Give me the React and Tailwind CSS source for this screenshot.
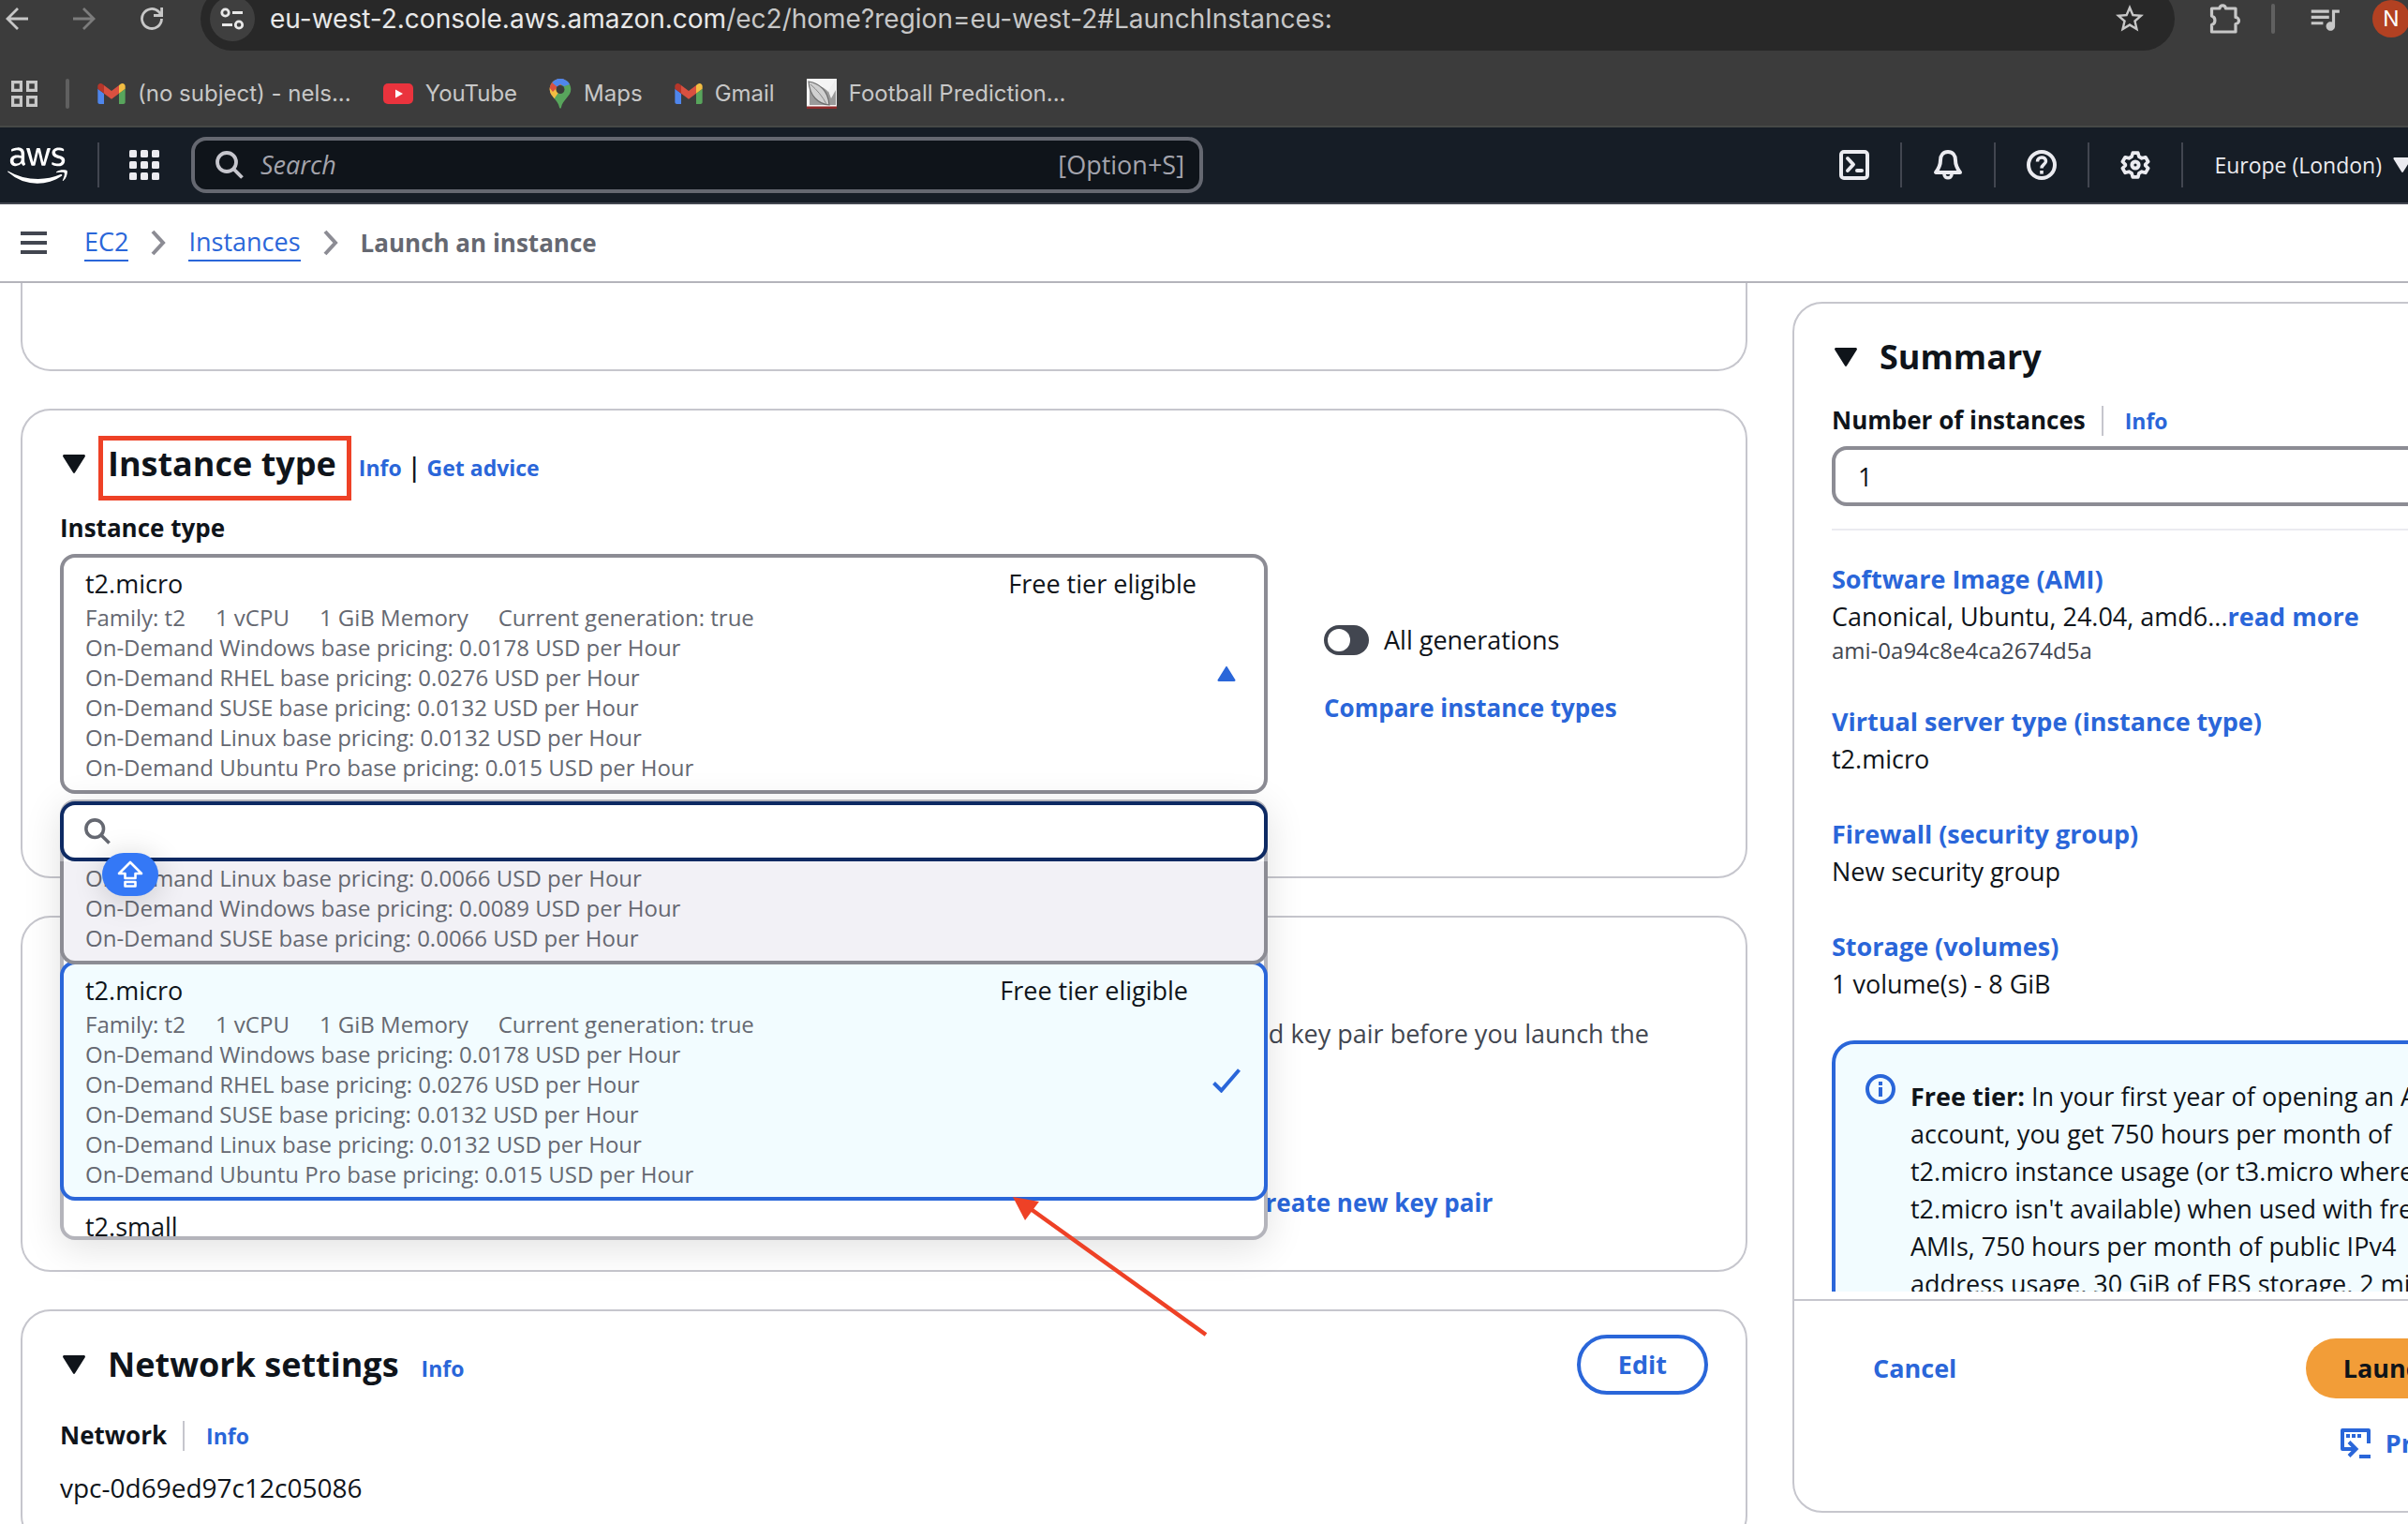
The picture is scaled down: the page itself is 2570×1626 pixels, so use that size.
import React from "react";
import { FaAws } from "react-icons/fa";
import { MdStarBorder, MdQueueMusic } from "react-icons/md";

/* ---------- icons ---------- */

const GmailIcon = () => (
  <svg viewBox="52 42 88 66" className="h-[22px] w-[30px] shrink-0" aria-hidden="true">
    <path fill="#4f86ec" d="M58 108h14V74L52 59v43c0 3.32 2.69 6 6 6" />
    <path fill="#58a55c" d="M120 108h14c3.32 0 6-2.69 6-6V59l-20 15" />
    <path fill="#f2bd42" d="M120 48v26l20-15v-8c0-7.42-8.47-11.65-14.4-7.2" />
    <path fill="#d95040" d="M72 74V48l24 18 24-18v26L96 92" />
    <path fill="#b5362a" d="M52 51v8l20 15V48l-5.6-4.2c-5.94-4.45-14.4-.22-14.4 7.2" />
  </svg>
);

const YouTubeIcon = () => (
  <svg viewBox="0 0 32 22" className="h-[22px] w-8 shrink-0" aria-hidden="true">
    <rect width="32" height="22" rx="5" fill="#ea333d" />
    <path d="M13 6.500v9l8-4.500z" fill="#fff" />
  </svg>
);

const MapsIcon = () => (
  <svg viewBox="0 0 24 32" className="h-8 w-6 shrink-0" aria-hidden="true">
    <defs>
      <clipPath id="pin">
        <path d="M12 0C5.400 0 .7 5.100.7 11.300c0 7.700 9 11.200 10.300 19.300.2 1.600 1.800 1.600 2 0 1.300-8.100 10.300-11.600 10.300-19.300C23.300 5.100 18.600 0 12 0z" />
      </clipPath>
    </defs>
    <g clipPath="url(#pin)">
      <rect width="24" height="32" fill="#58a55c" />
      <path d="M0 22 18 0h-18z" fill="#d95040" />
      <path d="M5 24 0 18V10l4-5 8 7-7 10z" fill="#f2bd42" />
      <path d="M3 4.500 8.500 9 18 0H6z" fill="#4f86ec" />
      <path d="M24 0H8l-1 3 9 5 6-2z" fill="#4f86ec" />
      <path d="M0 9 3 4l6 5-5 5z" fill="#d95040" />
    </g>
    <circle cx="12" cy="11.500" r="4.500" fill="#3c3c3c" />
  </svg>
);

const FootballIcon = () => (
  <svg viewBox="0 0 32 32" className="size-8 shrink-0" aria-hidden="true">
    <rect width="32" height="32" fill="#f5f5f5" />
    <path d="M0 29.500h32V32H0z" fill="#8f2b2b" />
    <path d="M31 2v26H3V4c8 2 17 6 20 10z" fill="#9a9a9a" />
    <path d="M2 3c12 2 21 10 22 25C12 27 3 18 2 3z" fill="#d0d0d0" stroke="#6e6e6e" strokeWidth="1.200" />
    <path d="M4 6c7 6 13 13 17 21" stroke="#8a8a8a" fill="none" />
    <path d="M31 1 23 13l3 8 5-9z" fill="#efefef" />
  </svg>
);

const SearchIcon = ({ className }) => (
  <svg viewBox="0 0 30 30" className={className} fill="none" stroke="currentColor" strokeWidth="3.800" aria-hidden="true">
    <circle cx="12" cy="12" r="10" />
    <path d="m19 19 9.500 9.500" />
  </svg>
);

const CaretDown = ({ className }) => (
  <svg viewBox="0 0 24 20" className={className} aria-hidden="true">
    <path d="M1.500 0h21c1.200 0 1.800 1.300 1.200 2.200L13 19.300c-.5.800-1.500.8-2 0L.3 2.200C-.3 1.300.3 0 1.500 0z" fill="currentColor" />
  </svg>
);

const Chevron = () => (
  <svg viewBox="0 0 16 28" className="h-7 w-4 shrink-0 text-[#8c8c94]" fill="none" stroke="currentColor" strokeWidth="4" aria-hidden="true">
    <path d="m2 2 11 12L2 26" />
  </svg>
);

const svg32 = {
  viewBox: "0 0 32 32",
  className: "size-8",
  fill: "none",
  stroke: "currentColor",
  strokeWidth: 4,
  strokeLinejoin: "round",
  "aria-hidden": true,
};

const CloudShellIcon = () => (
  <svg {...svg32}>
    <rect x="2" y="2" width="28" height="28" rx="3" />
    <path d="m9 9 6 6.500L9 22" strokeLinecap="round" />
    <path d="M19 22h5" strokeLinecap="round" />
  </svg>
);

const BellIcon = () => (
  <svg {...svg32}>
    <path d="M16 2c-5 0-8 4-8 9 0 6-2 9-5 13h26c-3-4-5-7-5-13 0-5-3-9-8-9z" />
    <path d="M12 26c0 5 8 5 8 0" strokeWidth="3.500" />
  </svg>
);

const HelpIcon = () => (
  <svg {...svg32}>
    <circle cx="16" cy="16" r="14" />
    <path d="M11.500 12.500c0-6 9-6 9-.5 0 3.500-4.500 3.500-4.500 7.500" strokeWidth="3.500" />
    <path d="M14.200 22h3.600v3.600h-3.600z" fill="currentColor" stroke="none" />
  </svg>
);

const GearIcon = () => (
  <svg {...svg32}>
    <path d="M13 2h6l1.200 4.300 3.300 1.900 4.300-1.200 3 5.200L27.600 15.400v1.200l3.200 3.200-3 5.200-4.300-1.200-3.300 1.900L19 30h-6l-1.200-4.300-3.300-1.900L4.200 25l-3-5.200 3.200-3.200v-1.200L1.200 12.200l3-5.200 4.300 1.200 3.300-1.900z" transform="translate(1.300 1.300) scale(.92)" />
    <circle cx="16" cy="16" r="3.600" />
  </svg>
);

const AppsGrid = () => (
  <svg viewBox="0 0 32 32" className="size-8" fill="currentColor" aria-hidden="true">
    {[0, 12, 24].flatMap((y) => [0, 12, 24].map((x) => <rect key={`${x}-${y}`} x={x} y={y} width="8" height="8" rx="1.500" />))}
  </svg>
);

/* ---------- small shared pieces ---------- */

const Link = ({ children, className = "" }) => (
  <a href="#" className={`font-bold text-[#2a66d9] ${className}`}>{children}</a>
);
const InfoLink = ({ children = "Info" }) => <Link className="text-[23px]">{children}</Link>;

const Rule = () => <span className="mx-[17px] h-8 w-[2px] self-center bg-[#c6c6cd]" />;
const NavRule = () => <span className="h-12 w-[2px] bg-[#424650]" />;

const SectionTitle = ({ title, marked, children, action }) => (
  <div className="flex h-12 items-center">
    <button type="button" aria-label={`Collapse ${title}`} className="ml-[3px] mr-6">
      <CaretDown className="h-5 w-6" />
    </button>
    <div className="flex items-baseline gap-6">
      <h2 className="relative text-[36px] leading-[48px] font-bold whitespace-nowrap">
        {title}
        {marked && <span className="absolute -top-[6px] -right-4 -left-[10px] h-[69px] border-[5px] border-[#ee4126]" />}
      </h2>
      {children}
    </div>
    {action}
  </div>
);

const Card = ({ className = "", children }) => (
  <section className={`shrink-0 rounded-[32px] border-2 border-[#c6c6cd] px-10 pt-[33px] ${className}`}>{children}</section>
);

/* ---------- browser chrome ---------- */

const Bookmark = ({ icon, children }) => (
  <a href="#" className="flex items-center gap-[13px] whitespace-nowrap">
    {icon}
    {children}
  </a>
);

const Browser = () => (
  <div className="shrink-0 overflow-hidden border-b-2 border-[#464846] bg-[#3c3c3c] font-['Inter',sans-serif] text-[#c7c7c7]">
    <div className="flex h-10 items-center pl-[6px]">
      <button type="button" aria-label="Back">
        <svg viewBox="0 0 24 24" className="size-6" fill="none" stroke="currentColor" strokeWidth="2.800"><path d="M13 1 2 12l11 11M2 12h22" /></svg>
      </button>
      <button type="button" aria-label="Forward" className="ml-12 text-[#7c7c7c]">
        <svg viewBox="0 0 24 24" className="size-6" fill="none" stroke="currentColor" strokeWidth="2.800"><path d="m11 1 11 11-11 11M22 12H0" /></svg>
      </button>
      <button type="button" aria-label="Reload" className="ml-12">
        <svg viewBox="0 0 24 24" className="size-6" fill="none" stroke="currentColor" strokeWidth="2.800"><path d="M22.500 12A10.500 10.500 0 1 1 19.500 4.600L22 7.500M22.600 0v8.500H14" /></svg>
      </button>
      <div className="-my-[14px] ml-10 flex h-[68px] min-w-0 flex-1 items-center rounded-full bg-[#282828] pr-[30px] pl-[10px]">
        <button type="button" aria-label="Site information" className="flex size-12 items-center justify-center rounded-full bg-[#3f3f3f] text-[#e8e8e8]">
          <svg viewBox="0 0 26 24" className="h-6 w-[26px]" fill="none" stroke="currentColor" strokeWidth="2.800">
            <circle cx="5.500" cy="5.500" r="3.700" /><path d="M13 5.500h11M2 18.500h11" /><circle cx="20" cy="18.500" r="3.700" />
          </svg>
        </button>
        <p className="ml-4 flex-1 text-[28px] whitespace-nowrap">
          <span className="text-[#e8e8e8]">eu-west-2.console.aws.amazon.com</span>/ec2/home?region=eu-west-2#LaunchInstances:
        </p>
        <button type="button" aria-label="Bookmark this tab"><MdStarBorder className="size-9" /></button>
      </div>
      <button type="button" aria-label="Extensions" className="ml-[37px]">
        <svg viewBox="0 0 34 34" className="size-[34px]" fill="none" stroke="currentColor" strokeWidth="3.200" strokeLinejoin="round">
          <path d="M2.500 6h8.500a3.200 3.200 0 0 1 6.400 0H28v9.500a3.500 3.500 0 0 1 0 7V31H2.500v-7.500a5 5 0 0 0 0-9.500z" />
        </svg>
      </button>
      <span className="ml-8 h-8 w-1 rounded bg-[#606060]" />
      <button type="button" aria-label="Media controls" className="ml-[34px]"><MdQueueMusic className="size-[38px]" /></button>
      <div className="-mr-[2px] ml-8 flex size-10 shrink-0 items-center justify-center rounded-full bg-[#b24122] text-[23px] text-white">N</div>
    </div>
    <div className="mt-[26px] flex h-[68px] items-center pl-3 text-[24px]">
      <button type="button" aria-label="Tab groups">
        <svg viewBox="0 0 28 28" className="size-7" fill="none" stroke="currentColor" strokeWidth="3.200">
          <path d="M1.600 1.600h8.800v8.800H1.600zM17.600 1.600h8.800v8.800h-8.800zM1.600 17.600h8.800v8.800H1.600zM17.600 17.600h8.800v8.800h-8.800z" />
        </svg>
      </button>
      <span className="mx-[30px] h-8 w-1 rounded bg-[#606060]" />
      <nav className="flex items-center gap-[34px]">
        <Bookmark icon={<GmailIcon />}>(no subject) - nels...</Bookmark>
        <Bookmark icon={<YouTubeIcon />}>YouTube</Bookmark>
        <Bookmark icon={<MapsIcon />}>Maps</Bookmark>
        <Bookmark icon={<GmailIcon />}>Gmail</Bookmark>
        <Bookmark icon={<FootballIcon />}>Football Prediction...</Bookmark>
      </nav>
    </div>
  </div>
);

/* ---------- console header ---------- */

const ConsoleHeader = () => (
  <header className="flex h-[82px] shrink-0 items-center overflow-hidden border-b-2 border-[#424650] bg-[#161d26] pl-2 text-[#ebebf0]">
    <a href="#" aria-label="AWS home"><FaAws className="h-[51px] w-16 text-white" /></a>
    <span className="mx-8 h-12 w-[2px] bg-[#424650]" />
    <button type="button" aria-label="Services"><AppsGrid /></button>
    <div className="ml-[34px] flex h-[60px] w-[1080px] items-center gap-[18px] rounded-2xl border-4 border-[#656871] bg-[#0f141a] pr-4 pl-[22px] text-[27px]">
      <SearchIcon className="size-[30px] text-[#c6c6cd]" />
      <input type="text" aria-label="Search" placeholder="Search" className="min-w-0 flex-1 bg-transparent outline-none placeholder:text-[#a4a4ad] placeholder:italic" />
      <span className="text-[#a4a4ad]">[Option+S]</span>
    </div>
    <div className="-mr-1 ml-auto flex shrink-0 items-center gap-[33px]">
      <button type="button" aria-label="CloudShell"><CloudShellIcon /></button>
      <NavRule />
      <button type="button" aria-label="Notifications"><BellIcon /></button>
      <NavRule />
      <button type="button" aria-label="Help"><HelpIcon /></button>
      <NavRule />
      <button type="button" aria-label="Settings"><GearIcon /></button>
      <NavRule />
      <button type="button" className="flex items-center gap-3 text-[23px] font-medium whitespace-nowrap">
        Europe (London)
        <CaretDown className="h-4 w-5" />
      </button>
    </div>
  </header>
);

const Breadcrumbs = () => (
  <nav aria-label="Breadcrumbs" className="flex h-[84px] shrink-0 items-center border-b-2 border-[#b4b4bb] pl-[22px] text-[27px]">
    <button type="button" aria-label="Open navigation" className="mr-[40px]">
      <svg viewBox="0 0 28 24" className="h-6 w-7" fill="#424650"><path d="M0 0h28v4H0zM0 10h28v4H0zM0 20h28v4H0z" /></svg>
    </button>
    <div className="flex items-center gap-6">
      <a href="#" className="border-b-2 border-[#2a66d9] leading-[38px] text-[#2a66d9]">EC2</a>
      <Chevron />
      <a href="#" className="border-b-2 border-[#2a66d9] leading-[38px] text-[#2a66d9]">Instances</a>
      <Chevron />
      <span className="text-[26px] leading-10 font-bold text-[#656871]">Launch an instance</span>
    </div>
  </nav>
);

/* ---------- instance type ---------- */

const micro = [
  "On-Demand Windows base pricing: 0.0178 USD per Hour",
  "On-Demand RHEL base pricing: 0.0276 USD per Hour",
  "On-Demand SUSE base pricing: 0.0132 USD per Hour",
  "On-Demand Linux base pricing: 0.0132 USD per Hour",
  "On-Demand Ubuntu Pro base pricing: 0.015 USD per Hour",
];
const nano = [
  "On-Demand Linux base pricing: 0.0066 USD per Hour",
  "On-Demand Windows base pricing: 0.0089 USD per Hour",
  "On-Demand SUSE base pricing: 0.0066 USD per Hour",
];

const Prices = ({ lines }) => lines.map((l) => <span key={l} className="block">{l}</span>);

const MicroDetails = () => (
  <span className="block flex-1 text-left">
    <span className="flex justify-between text-[27px] leading-10">
      <span>t2.micro</span>
      <span>Free tier eligible</span>
    </span>
    <span className="block text-[24px] leading-8 text-[#656871]">
      <span className="flex gap-8">
        <span>Family: t2</span>
        <span>1 vCPU</span>
        <span>1 GiB Memory</span>
        <span>Current generation: true</span>
      </span>
      <Prices lines={micro} />
    </span>
  </span>
);

const Dropdown = () => (
  <div className="absolute inset-x-0 top-full z-20 mt-[6px] rounded-2xl border-4 border-[#b4b4bb] bg-white shadow-[0_8px_40px_rgba(0,0,0,0.12)]">
    <div className="-mx-1 -mt-[2px] flex h-16 items-center rounded-2xl border-4 border-[#0e2a63] bg-white px-[22px]">
      <SearchIcon className="size-7 text-[#656871]" />
      <input type="text" aria-label="Filter instance types" className="ml-4 min-w-0 flex-1 text-[27px] outline-none" />
    </div>
    <ul role="listbox" aria-label="Instance types" className="-mx-1 h-[400px] overflow-hidden">
      <li role="option" aria-selected="false" className="relative z-10 rounded-b-2xl border-4 border-t-0 border-[#8c8c94] bg-[#f2f1f6] px-[23px] pt-[2px] pb-2 text-[24px] leading-8 text-[#656871]">
        <Prices lines={nano} />
      </li>
      <li role="option" aria-selected="true" className="relative -mt-1 flex items-center gap-[26px] rounded-2xl border-4 border-[#2a66d9] bg-[#f2fcff] py-2 pr-[25px] pl-[23px]">
        <MicroDetails />
        <svg viewBox="0 0 30 26" className="h-[26px] w-[30px]" fill="none" stroke="#2a66d9" strokeWidth="4"><path d="m1.500 15.500 8 8L28.500 1.500" /></svg>
      </li>
      <li role="option" aria-selected="false" className="-mt-1 border-4 border-transparent px-[23px] pt-2 text-[27px] leading-10">t2.small</li>
    </ul>
    <div className="absolute top-[53px] left-[41px] z-20 flex h-[46px] w-[60px] items-center justify-center rounded-full bg-[#3478f6] shadow-[0_4px_32px_rgba(0,0,0,0.18)]">
      <svg viewBox="0 0 30 30" className="size-[30px]" fill="none" stroke="#fff" strokeWidth="2.600" strokeLinejoin="round">
        <path d="M15 2 27 14h-6.500v5h-11v-5H3z" /><path d="M9.500 23h11v4.500h-11z" />
      </svg>
    </div>
    <svg viewBox="0 0 216 156" className="pointer-events-none absolute top-[416px] left-[1010px] z-20 h-[156px] w-[216px]" aria-hidden="true">
      <path d="M18 14 209 151" stroke="#ee4126" strokeWidth="4.500" />
      <path d="M3 4 31 9 16 29z" fill="#ee4126" />
    </svg>
  </div>
);

const InstanceTypeCard = () => (
  <Card className="pb-[88px]">
    <SectionTitle title="Instance type" marked>
      <span className="flex items-baseline gap-[6px]">
        <InfoLink />
        <span className="text-[27px] font-semibold">|</span>
        <InfoLink>Get advice</InfoLink>
      </span>
    </SectionTitle>
    <p id="type-label" className="mt-6 text-[26px] leading-10 font-bold">Instance type</p>
    <div className="mt-2 grid grid-cols-[minmax(0,1fr)_410px] items-center gap-[60px]">
      <div className="relative">
        <button type="button" aria-labelledby="type-label" aria-expanded="true" className="flex w-full items-center gap-[22px] rounded-2xl border-4 border-[#8c8c94] py-2 pr-[30px] pl-[23px]">
          <MicroDetails />
          <CaretDown className="h-4 w-5 rotate-180 text-[#2a66d9]" />
        </button>
        <Dropdown />
      </div>
      <div className="flex flex-col items-start gap-8 text-[27px] leading-10">
        <label className="flex items-center gap-4">
          <input type="checkbox" role="switch" className="h-8 w-12 appearance-none rounded-full bg-[#424650] p-1 before:block before:size-6 before:rounded-full before:bg-white" />
          All generations
        </label>
        <Link className="text-[26px]">Compare instance types</Link>
      </div>
    </div>
  </Card>
);

const KeyPairCard = () => (
  <Card className="pb-10 text-[27px] leading-10">
    <SectionTitle title="Key pair (login)"><InfoLink /></SectionTitle>
    <p className="mt-[23px] pr-[63px] text-right whitespace-nowrap text-[#424650]">
      You can use a key pair to securely connect to your instance. Ensure that you have access to the selected key pair before you launch the
    </p>
    <p className="text-[#424650]">instance.</p>
    <label htmlFor="key-pair" className="mt-[43px] block text-[26px] font-bold">Key pair name - required</label>
    <div className="mt-[5px] flex h-16 items-center">
      <select id="key-pair" className="h-16 w-[1200px] appearance-none rounded-2xl border-4 border-[#8c8c94] px-6">
        <option>Select</option>
      </select>
      <Link className="ml-[70px] text-[26px]">Create new key pair</Link>
    </div>
  </Card>
);

const NetworkCard = () => (
  <Card className="pb-10">
    <SectionTitle
      title="Network settings"
      action={
        <button type="button" className="ml-auto h-16 rounded-full border-4 border-[#2a66d9] px-10 text-[27px] font-bold text-[#2a66d9]">Edit</button>
      }
    >
      <InfoLink />
    </SectionTitle>
    <div className="mt-[31px] flex items-baseline text-[26px] leading-10">
      <span className="font-bold">Network</span>
      <Rule />
      <span className="ml-[6px]"><InfoLink /></span>
    </div>
    <p className="mt-[15px] text-[28px] leading-10">vpc-0d69ed97c12c05086</p>
  </Card>
);

/* ---------- summary ---------- */

const SummaryItem = ({ title, children }) => (
  <div>
    <Link>{title}</Link>
    {children}
  </div>
);

const Summary = () => (
  <aside className="flex w-[657px] shrink-0 overflow-hidden pt-5 pb-3">
    <div className="flex w-[892px] shrink-0 flex-col rounded-[32px] border-2 border-[#c6c6cd]">
      <div className="mb-2 min-h-0 flex-1 overflow-hidden px-10 pt-[33px] text-[27px] leading-10">
        <SectionTitle title="Summary" />
        <div className="mt-[23px] flex items-baseline">
          <label htmlFor="count" className="text-[26px] font-bold">Number of instances</label>
          <Rule />
          <span className="ml-[6px]"><InfoLink /></span>
        </div>
        <input id="count" type="text" defaultValue="1" className="mt-[7px] block h-16 w-full rounded-2xl border-4 border-[#8c8c94] px-6 leading-8 outline-none" />
        <hr className="mt-6 mb-8 border-t-2 border-[#ebebf0]" />
        <div className="flex flex-col gap-10">
          <SummaryItem title="Software Image (AMI)">
            <p>Canonical, Ubuntu, 24.04, amd6...<Link>read more</Link></p>
            <p className="text-[24px] leading-8 text-[#424650]">ami-0a94c8e4ca2674d5a</p>
          </SummaryItem>
          <SummaryItem title="Virtual server type (instance type)"><p>t2.micro</p></SummaryItem>
          <SummaryItem title="Firewall (security group)"><p>New security group</p></SummaryItem>
          <SummaryItem title="Storage (volumes)"><p>1 volume(s) - 8 GiB</p></SummaryItem>
          <div className="flex gap-4 rounded-3xl border-4 border-[#2a66d9] bg-[#f2fcff] px-8 py-8">
            <svg viewBox="0 0 32 32" className="size-8 shrink-0 text-[#2a66d9]" fill="none" stroke="currentColor" strokeWidth="4">
              <circle cx="16" cy="16" r="14" /><path d="M16 8v4M16 14v10" />
            </svg>
            <p className="mt-1 whitespace-nowrap">
              <b>Free tier:</b> In your first year of opening an AWS<br />
              account, you get 750 hours per month of<br />
              t2.micro instance usage (or t3.micro where<br />
              t2.micro isn't available) when used with free tier<br />
              AMIs, 750 hours per month of public IPv4<br />
              address usage, 30 GiB of EBS storage, 2 million
            </p>
          </div>
        </div>
      </div>
      <div className="flex h-[226px] shrink-0 items-start justify-between border-t-2 border-[#c6c6cd] pt-10 pr-[42px] pl-[84px] text-[27px] leading-10 font-bold">
        <button type="button" className="h-16 text-[#2a66d9]">Cancel</button>
        <div className="flex flex-col items-center gap-7">
          <button type="button" className="h-16 w-[300px] rounded-full bg-[#f29d38] text-[#0f141a]">Launch instance</button>
          <button type="button" className="flex items-center gap-4 text-[#2a66d9]">
            <svg viewBox="0 0 32 32" className="size-8" fill="none" stroke="currentColor" strokeWidth="4">
              <path d="M30 16V2H2v20h13" strokeLinejoin="round" />
              <path d="m9 14.500 7.500 7.500L9 29.500" /><path d="M20 30h12" /><path d="M6 8h4M12 8h4M18 8h4" />
            </svg>
            Preview code
          </button>
        </div>
      </div>
    </div>
  </aside>
);

export default function App() {
  return (
    <div className="flex h-screen flex-col overflow-hidden bg-white font-['Open_Sans','Noto_Sans',sans-serif] text-[#0f141a]">
      <Browser />
      <ConsoleHeader />
      <Breadcrumbs />
      <main className="flex min-h-0 flex-1 gap-12 overflow-hidden pl-[22px]">
        <div className="flex min-w-0 flex-1 flex-col gap-10">
          <section className="h-[94px] shrink-0 rounded-b-[32px] border-2 border-t-0 border-[#c6c6cd]" />
          <InstanceTypeCard />
          <KeyPairCard />
          <NetworkCard />
        </div>
        <Summary />
      </main>
    </div>
  );
}
